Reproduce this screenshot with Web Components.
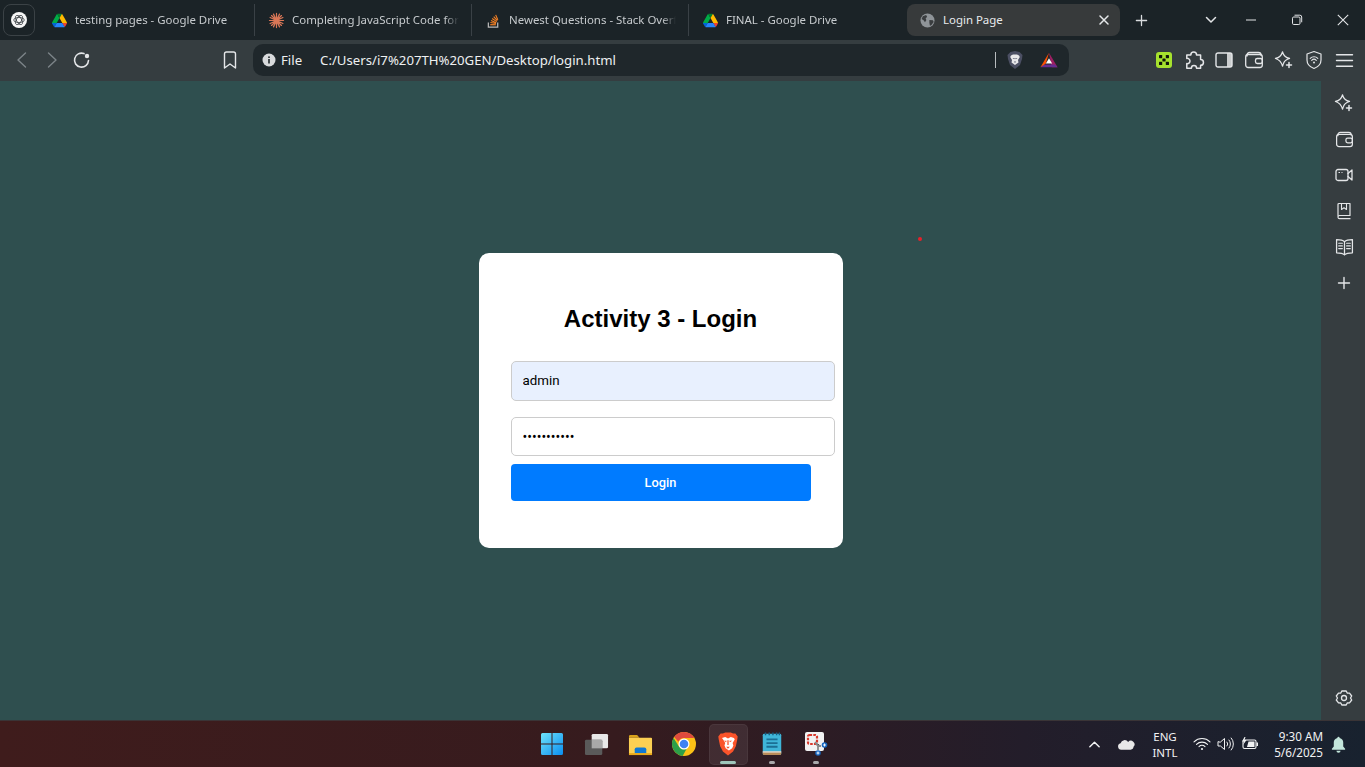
<!DOCTYPE html>
<html lang="en">
<head>
<meta charset="utf-8">
<title>Login Page</title>
<style>
  html, body { margin: 0; height: 100%; overflow: hidden; background: #2f4f4f; }
  body { font-family: "Noto Sans", "Liberation Sans", sans-serif; }
</style>
</head>
<body>
<browser-window>
  <tab-strip></tab-strip>
  <nav-toolbar></nav-toolbar>
  <page-view><login-card></login-card></page-view>
  <task-bar></task-bar>
</browser-window>

<script>
const LINE = 'fill="none" stroke="currentColor" stroke-linecap="round" stroke-linejoin="round"';
const DRIVE = `<svg viewBox="0 0 87.3 78"><path fill="#0066da" d="m6.6 66.85 3.85 6.65c.8 1.4 1.95 2.5 3.3 3.3l13.75-23.8h-27.5c0 1.55.4 3.1 1.2 4.5z"/><path fill="#00ac47" d="m43.65 25-13.75-23.8c-1.35.8-2.5 1.9-3.3 3.3l-25.4 44a9.06 9.06 0 0 0 -1.2 4.5h27.5z"/><path fill="#ea4335" d="m73.55 76.8c1.35-.8 2.5-1.9 3.3-3.3l1.6-2.75 7.65-13.25c.8-1.4 1.2-2.95 1.2-4.5h-27.502l5.852 11.5z"/><path fill="#00832d" d="m43.65 25 13.75-23.8c-1.35-.8-2.9-1.2-4.5-1.2h-18.5c-1.6 0-3.15.45-4.5 1.2z"/><path fill="#2684fc" d="m59.8 53h-32.3l-13.75 23.8c1.35.8 2.9 1.2 4.5 1.2h50.8c1.6 0 3.15-.45 4.5-1.2z"/><path fill="#ffba00" d="m73.4 26.5-12.7-22c-.8-1.4-1.95-2.5-3.3-3.3l-13.75 23.8 16.15 28h27.45c0-1.55-.4-3.1-1.2-4.5z"/></svg>`;

const ICONS = {
  drive: DRIVE,
  openai: `<svg viewBox="0 0 16 16"><circle cx="8" cy="8" r="8" fill="#f6f6f6"/><g fill="none" stroke="#3a4044" stroke-width=".8"><ellipse cx="8" cy="8" rx="5.200" ry="2.500"/><ellipse cx="8" cy="8" rx="5.200" ry="2.500" transform="rotate(60 8 8)"/><ellipse cx="8" cy="8" rx="5.200" ry="2.500" transform="rotate(120 8 8)"/></g></svg>`,
  claude: `<svg viewBox="0 0 16 16"><g stroke="#d97757" stroke-width="1.300" stroke-linecap="round"><path d="M8 .5v15M.5 8h15M2.700 2.700l10.600 10.600M13.300 2.700 2.700 13.300M4.800 1.200l6.400 13.600M11.200 1.200l-6.400 13.600M1.200 4.800l13.600 6.400M14.800 4.800l-13.600 6.400"/></g><circle cx="8" cy="8" r="2.500" fill="#d97757"/></svg>`,
  stack: `<svg viewBox="0 0 16 16"><path d="M2.500 10v5h10v-5" fill="none" stroke="#bcbbbb" stroke-width="1.300"/><path d="M4.500 12.500h6" stroke="#f48024" stroke-width="1.300"/><path d="M4.700 10.200l6 1M5.300 8l5.600 2.400M6.500 5.800l5 3.400M8.200 3.800l3.900 4.400M10.300 2l2.300 5.300" fill="none" stroke="#f48024" stroke-width="1.200"/></svg>`,
  globe: `<svg viewBox="0 0 16 16"><circle cx="8" cy="8" r="7.500" fill="#8f9498"/><path fill="#3a3d3f" d="M3 3.500 6.500 2.200 7.600 4 6 5.800 6.800 7.500 5.300 9.800 3.800 7.600 1.700 6.500zM10 7.500l3.800.3.800 1.700-2.600 3.500-1.400.6-.6-3.200z"/></svg>`,
  close: `<svg viewBox="0 0 12 12"><path ${LINE} stroke-width="1.500" d="M2 2l8 8M10 2l-8 8"/></svg>`,
  plus: `<svg viewBox="0 0 14 14"><path ${LINE} stroke-width="1.400" d="M7 1.500v11M1.500 7h11"/></svg>`,
  chevdown: `<svg viewBox="0 0 14 14"><path ${LINE} stroke-width="1.500" d="M2.500 4.500 7 9l4.500-4.500"/></svg>`,
  min: `<svg viewBox="0 0 12 12"><path stroke="currentColor" d="M1 6h10"/></svg>`,
  restore: `<svg viewBox="0 0 12 12"><rect x="1.500" y="3" width="7.500" height="7.500" rx="1.200" fill="none" stroke="currentColor"/><path d="M3.500 1.200h5.300A1.800 1.800 0 0 1 10.700 3v5.300" fill="none" stroke="currentColor"/></svg>`,
  winclose: `<svg viewBox="0 0 12 12"><path stroke="currentColor" stroke-width="1.100" d="M.8.8l10.400 10.400M11.200.8.8 11.200"/></svg>`,
  back: `<svg viewBox="0 0 20 20"><path ${LINE} stroke-width="1.400" d="M13.500 3 6 10l7.500 7"/></svg>`,
  forward: `<svg viewBox="0 0 20 20"><path ${LINE} stroke-width="1.400" d="M6.500 3 14 10l-7.500 7"/></svg>`,
  reload: `<svg viewBox="0 0 20 20"><path ${LINE} stroke-width="1.600" d="M16.500 10.500A7 7 0 1 1 12 3.600"/><circle cx="15" cy="6" r="2.200" fill="currentColor"/></svg>`,
  bookmark: `<svg viewBox="0 0 20 20"><path ${LINE} stroke-width="1.400" d="M4.500 4A2 2 0 0 1 6.500 2h7a2 2 0 0 1 2 2v14L10 14l-5.500 4z"/></svg>`,
  info: `<svg viewBox="0 0 14 14"><circle cx="7" cy="7" r="6.500" fill="#d8dadc"/><rect x="6.200" y="6" width="1.600" height="4.500" fill="#1f272b"/><rect x="6.200" y="3.400" width="1.600" height="1.600" fill="#1f272b"/></svg>`,
  shieldlion: `<svg viewBox="0 0 16 18"><path fill="#4b4f63" d="M3.500 1 8 0l4.500 1L15.500 4 15 8l-2 6-5 4-5-4-2-6L.5 4z"/><path fill="#e8e8ea" d="M4 4.500 6 3.500h4L12 4.500 12.800 6 11 9l.5 2.500L8 14 4.500 11.500 5 9 3.200 6z"/><path fill="#4b4f63" d="M5.500 7h2v1.200zM10.500 7h-2v1.200zM7 10.500h2L8 12z"/></svg>`,
  bat: `<svg viewBox="0 0 20 18"><path fill="#9e1f63" d="M10 1 19.500 17H13z"/><path fill="#662d91" d="M.5 17h19l-3-3H3.500z"/><path fill="#ff5000" d="M10 1 .5 17l6-4z"/><path fill="#fff" d="M10 7l3.500 6h-7z"/></svg>`,
  dice: `<svg viewBox="0 0 16 16"><rect width="16" height="16" rx="3" fill="#a6e22e"/><g fill="#10160a"><rect x="3" y="3" width="3.200" height="3.200" rx=".6"/><rect x="9.800" y="3" width="3.200" height="3.200" rx=".6"/><rect x="6.400" y="6.400" width="3.200" height="3.200" rx=".6"/><rect x="3" y="9.800" width="3.200" height="3.200" rx=".6"/><rect x="9.800" y="9.800" width="3.200" height="3.200" rx=".6"/></g></svg>`,
  puzzle: `<svg viewBox="0 0 20 20"><path ${LINE} stroke-width="1.300" d="M3.500 6H7a2.500 2.500 0 1 1 5 0h3.500v4a2.500 2.500 0 1 1 0 5v2.500H12a2.200 2.200 0 1 0-4.500 0H3.500V13.500a2.300 2.300 0 1 0 0-4.500z" transform="translate(-.2 -.8)"/></svg>`,
  panel: `<svg viewBox="0 0 18 16"><rect x="1" y="1" width="16" height="14" rx="2" fill="none" stroke="currentColor" stroke-width="1.400"/><path d="M12 1h3a2 2 0 0 1 2 2v10a2 2 0 0 1-2 2h-3z" fill="currentColor" opacity=".85"/></svg>`,
  wallet: `<svg viewBox="0 0 20 18"><path ${LINE} stroke-width="1.300" d="M3 5V4a2.500 2.500 0 0 1 2.500-2.500h9A2.500 2.500 0 0 1 17 4"/><rect x="1.700" y="3.500" width="16.600" height="13" rx="2.500" fill="none" stroke="currentColor" stroke-width="1.300"/><rect x="11.500" y="7.500" width="6.800" height="5" rx="1.800" fill="none" stroke="currentColor" stroke-width="1.300"/></svg>`,
  leo: `<svg viewBox="0 0 20 20"><path ${LINE} stroke-width="1.300" d="M8.500 1.800c1 3.800 2.800 5.600 7 6.700-3.300 1-5 2.300-5.800 4.500M8.500 1.800c-1 3.800-2.800 5.600-7 6.700 3.800 1.100 5.800 3.200 7 7.700.3-1 .6-1.900 1-2.700"/><path ${LINE} stroke-width="1.500" d="M15 12.500v5M12.500 15h5"/></svg>`,
  vpn: `<svg viewBox="0 0 18 20"><path ${LINE} stroke-width="1.200" d="M9 1.500 16 4v6c0 4-3 7-7 8.500C5 17 2 14 2 10V4z"/><path ${LINE} stroke-width="1.100" d="M5.200 8.300a5.500 5.500 0 0 1 7.600 0M6.700 10.300a3.300 3.300 0 0 1 4.600 0"/><circle cx="9" cy="12.500" r="1" fill="currentColor"/></svg>`,
  menu: `<svg viewBox="0 0 18 14"><path stroke="currentColor" stroke-width="1.500" stroke-linecap="round" d="M1.500 1.500h15M1.500 7h15M1.500 12.500h15"/></svg>`,
  camera: `<svg viewBox="0 0 18 14"><rect x="1" y="1.500" width="12" height="11" rx="2" fill="none" stroke="currentColor" stroke-width="1.300"/><path ${LINE} stroke-width="1.300" d="M13 5.500 17 2v10l-4-3.500"/><path stroke="currentColor" stroke-width="1.200" d="M3.500 4.500h1.500M6.500 4.500h1"/></svg>`,
  book: `<svg viewBox="0 0 16 18"><path ${LINE} stroke-width="1.200" d="M2 14.500V2.500a1 1 0 0 1 1-1h11v12H3.500A1.700 1.700 0 0 0 2 15.200a1.700 1.700 0 0 0 1.500 1.500H14"/><path ${LINE} stroke-width="1.100" d="M5.500 1.500v6L8 5.800l2.500 1.700v-6"/></svg>`,
  reader: `<svg viewBox="0 0 18 18"><path ${LINE} stroke-width="1.200" d="M9 3.500C7.500 2 5 1.500 1.500 1.500v12.500c3.500 0 6 .5 7.500 2 1.500-1.500 4-2 7.500-2V1.500C13 1.500 10.500 2 9 3.500zM9 3.500V16"/><path ${LINE} stroke-width="1.100" d="M3.500 5h3.500M3.500 7.500h3.500M3.500 10h3.500M11 5h3.500M11 7.500h3.500M11 10h3.500"/></svg>`,
  cog: `<svg viewBox="0 0 18 18"><path ${LINE} stroke-width="1.300" d="M6.800 2h4.400l1 2 2.300.2L16.700 7l-1.200 2 1.200 2-2.200 2.800-2.300.2-1 2H6.800l-1-2-2.300-.2L1.300 11l1.200-2-1.200-2 2.200-2.800L5.800 4z"/><circle cx="9" cy="9" r="2.500" fill="none" stroke="currentColor" stroke-width="1.300"/></svg>`,
  windows: `<svg viewBox="0 0 24 24"><defs><linearGradient id="w" x1="0" y1="0" x2="1" y2="1"><stop offset="0" stop-color="#6fe3fb"/><stop offset="1" stop-color="#0a8ef0"/></linearGradient></defs><path fill="url(#w)" d="M1 2.500A1.500 1.500 0 0 1 2.500 1h9v10.500H1zM12.500 1h9A1.500 1.500 0 0 1 23 2.500v9H12.500zM1 12.500h10.500V23h-9A1.500 1.500 0 0 1 1 21.500zM12.500 12.500H23v9a1.500 1.500 0 0 1-1.500 1.500h-9z"/></svg>`,
  taskview: `<svg viewBox="0 0 26 24"><rect x="8" y="1" width="17" height="15" rx="1.500" fill="#e8e8e8"/><rect x="1" y="7" width="18" height="16" rx="1.500" fill="#5a5a5a"/><rect x="8" y="7" width="11" height="9" fill="#a8a8a8"/></svg>`,
  folder: `<svg viewBox="0 0 26 24"><path fill="#d9a21b" d="M1 3.500A1.500 1.500 0 0 1 2.500 2h7l2.500 3h-11z"/><path fill="#fcd053" d="M1 5h23a1 1 0 0 1 1 1v15.500a1.500 1.500 0 0 1-1.500 1.500h-21A1.500 1.500 0 0 1 1 21.500z"/><path fill="#0f78d4" d="M7 21v-4a2 2 0 0 1 2-2h8a2 2 0 0 1 2 2v4z"/><rect x="1" y="21" width="24" height="2" fill="#e9a91a"/></svg>`,
  chrome: `<svg viewBox="0 0 24 24"><circle cx="12" cy="12" r="12" fill="#fbc116"/><path fill="#dd4b3e" d="M12 0a12 12 0 0 1 10.400 6H12a6 6 0 0 0-5.600 3.800L2.200 5A12 12 0 0 1 12 0z"/><path fill="#2c9f49" d="M1.600 5.900A12 12 0 0 0 10.600 23.900l4.200-7.300a6 6 0 0 1-7.900-2z"/><circle cx="12" cy="12" r="5.500" fill="#fff"/><circle cx="12" cy="12" r="4.300" fill="#3e82f1"/></svg>`,
  brave: `<svg viewBox="0 0 22 26"><path fill="#fb542b" d="M5.500 1.500 8 .5h6l2.500 1 2.500.2L21.500 5 21 8.500l-1.500 7-3 5.500L11 25.500 5.500 21l-3-5.500L1 8.500.5 5 3 1.700z"/><path fill="#fff" d="M4.500 6.500 8 5.500 11 7l3-1.500 3.500 1 .8 1.500-2.300 4 .8 2.500-1.300 3-3.500 2.500-3.500-2.500-1.300-3 .8-2.500-2.300-4z"/><path fill="#fb542b" d="M6.500 9.500h3l-.5 1.700zM15.500 9.500h-3l.5 1.700zM9 16h4l-2 2.200zM10.300 9h1.400v5h-1.400z"/></svg>`,
  notepad: `<svg viewBox="0 0 22 26"><rect x="1" y="2" width="20" height="23" rx="1.500" fill="#3fb5d8"/><path fill="#b98c5a" d="M1 21h20v2.500a1.500 1.500 0 0 1-1.500 1.500h-17A1.500 1.500 0 0 1 1 23.500z"/><rect x="1" y="21" width="20" height="1.200" fill="#eee"/><path stroke="#1b6f94" stroke-width="2" d="M5 8h12M5 12h12M5 16h12"/><path stroke="#145d80" stroke-width="1.500" d="M4 .5v3M8 .5v3M12 .5v3M16 .5v3M19 .5v3"/></svg>`,
  snip: `<svg viewBox="0 0 24 26"><rect x="1" y="1" width="19" height="19" rx="2" fill="#f2f2f2"/><rect x="4" y="4" width="9" height="9" rx="1.500" fill="none" stroke="#d8382c" stroke-width="2.200" stroke-dasharray="2.600 1.200"/><path stroke="#8a8a8a" stroke-width="1.800" d="M11 11 14 15l3 0M14 15v4"/><circle cx="20.500" cy="14" r="2.800" fill="#1566c0"/><circle cx="14" cy="22" r="2.800" fill="#1566c0"/><path stroke="#fff" stroke-width=".9" d="M19 14h3M20.500 12.500v3M12.500 22h3M14 20.500v3"/></svg>`,
  chevup: `<svg viewBox="0 0 14 14"><path ${LINE} stroke-width="1.600" d="M2 9.500 7 4.500l5 5"/></svg>`,
  cloud: `<svg viewBox="0 0 18 12"><path fill="#e8e8e8" d="M4.500 11.500A3.500 3.500 0 0 1 3.800 4.600 4.500 4.500 0 0 1 11.800 3.300 3.800 3.800 0 0 1 17.500 8.500c0 1.700-1.200 3-3 3z"/></svg>`,
  wifi: `<svg viewBox="0 0 18 14"><path ${LINE} stroke-width="1.100" d="M1 4.800a11.500 11.500 0 0 1 16 0M3.500 7.300a8 8 0 0 1 11 0M6 9.600a4.300 4.300 0 0 1 6 0"/><circle cx="9" cy="12" r="1.100" fill="currentColor"/></svg>`,
  volume: `<svg viewBox="0 0 18 14"><path ${LINE} stroke-width="1" d="M1 5v4h2.500L7.500 12.500v-11L3.500 5zM10 5a3 3 0 0 1 0 4M12 3a6 6 0 0 1 0 8M14.200 1a9 9 0 0 1 0 12"/></svg>`,
  battery: `<svg viewBox="0 0 18 14"><rect x="2" y="3" width="13" height="8.500" rx="1.500" fill="none" stroke="currentColor" stroke-width="1.100"/><rect x="15.500" y="5.500" width="1.500" height="3.500" fill="currentColor"/><path fill="currentColor" d="M7.500 4.500h6v5.500H6zM3.500 0 1 4.500h2L2 8l3.500-5h-2l1-3z"/></svg>`,
  bell: `<svg viewBox="0 0 16 18"><path fill="#c3e6db" d="M8 .8a1.200 1.200 0 0 1 1.200 1.200A5 5 0 0 1 13 7v4l2 2.500v1H1v-1L3 11V7a5 5 0 0 1 3.800-5A1.200 1.200 0 0 1 8 .8zM5.800 15.500h4.400a2.200 2.200 0 0 1-4.400 0z"/></svg>`
};

// one inline icon; "name" picks the drawing, "size" its box in px
class UiIcon extends HTMLElement {
  connectedCallback() {
    const size = this.getAttribute("size") || 16;
    const root = this.shadowRoot || this.attachShadow({ mode: "open" });
    root.innerHTML = `
      <style>
        :host { display: inline-flex; align-items: center; justify-content: center; flex: none; width: ${size}px; height: ${size}px; }
        svg { display: block; width: 100%; height: 100%; overflow: visible; }
      </style>
      ${ICONS[this.getAttribute("name")] || ""}
    `;
  }
}
customElements.define("ui-icon", UiIcon);

class BrowserWindow extends HTMLElement {
  constructor() {
    super();
    this.attachShadow({ mode: "open" }).innerHTML = `
      <style>
        :host { display: flex; flex-direction: column; height: 100vh; }
      </style>
      <slot></slot>
    `;
  }
}
customElements.define("browser-window", BrowserWindow);

class BrowserTab extends HTMLElement {
  constructor() {
    super();
    this.attachShadow({ mode: "open" });
  }
  connectedCallback() {
    const active = this.hasAttribute("active");
    this.shadowRoot.innerHTML = `
      <style>
        :host { display: flex; align-items: center; flex: none; box-sizing: border-box; width: 217px; height: 32px; padding-left: 14px; gap: 8px; color: #c6cacd; font-size: 11.45px; border-right: 1px solid #3a4146; }
        :host([active]) { width: 213px; margin-left: 1px; padding: 0 10px 0 13px; border: 0; border-radius: 8px; background: #373a3b; color: #e8eaed; }
        :host([last]) { border-right: 0; }
        .title { flex: 1; min-width: 0; white-space: nowrap; overflow: hidden; margin: -2px 12px 0 0;
          -webkit-mask-image: linear-gradient(to left, transparent 0, #000 14px); }
        :host([active]) .title { -webkit-mask-image: none; margin-right: 0; }
        .x { color: #e6e8ea; }
      </style>
      <ui-icon name="${this.getAttribute("icon")}" size="15"></ui-icon>
      <span class="title"><slot></slot></span>
      ${active ? '<ui-icon class="x" name="close" size="12"></ui-icon>' : ""}
    `;
  }
}
customElements.define("browser-tab", BrowserTab);

class TabStrip extends HTMLElement {
  constructor() {
    super();
    this.attachShadow({ mode: "open" }).innerHTML = `
      <style>
        :host { display: flex; align-items: center; flex: none; height: 40px; background: #1b2327; box-sizing: border-box; padding-left: 3px; }
        .app { display: flex; align-items: center; justify-content: center; box-sizing: border-box; width: 32px; height: 32px; border: 1px solid #3b4246; border-radius: 8px; margin-right: 3px; flex: none; }
        .new { margin-left: 15px; color: #d9dcde; }
        .win { display: flex; align-items: center; margin-left: auto; margin-right: -1px; color: #e3e5e7; }
        .win span { display: flex; align-items: center; justify-content: center; width: 46px; }
        .win span:first-child { margin-right: -6px; }
      </style>
      <div class="app"><ui-icon name="openai" size="16"></ui-icon></div>
      <browser-tab icon="drive">testing pages - Google Drive</browser-tab>
      <browser-tab icon="claude">Completing JavaScript Code for Login</browser-tab>
      <browser-tab icon="stack">Newest Questions - Stack Overflow</browser-tab>
      <browser-tab icon="drive" last>FINAL - Google Drive</browser-tab>
      <browser-tab icon="globe" active>Login Page</browser-tab>
      <ui-icon class="new" name="plus" size="13"></ui-icon>
      <div class="win">
        <span><ui-icon name="chevdown" size="14"></ui-icon></span>
        <span><ui-icon name="min" size="12"></ui-icon></span>
        <span><ui-icon name="restore" size="12"></ui-icon></span>
        <span><ui-icon name="winclose" size="12"></ui-icon></span>
      </div>
    `;
  }
}
customElements.define("tab-strip", TabStrip);

class NavToolbar extends HTMLElement {
  constructor() {
    super();
    this.attachShadow({ mode: "open" }).innerHTML = `
      <style>
        :host { display: flex; align-items: center; flex: none; height: 41px; box-sizing: border-box; padding: 0 6px 1px 7px; background: #353d40; color: #e4e6e8; }
        .btn { display: flex; align-items: center; justify-content: center; width: 30px; height: 30px; flex: none; }
        .off { color: #7c8488; }
        .mark { margin-left: 118px; }
        .url { display: flex; align-items: center; flex: 1; height: 32px; margin: 0 80px 0 8px; padding: 0 11px 0 9px; border-radius: 10px; background: #1f272b; color: #eef0f1; font-size: 13.2px; }
        .file { margin-left: 5px; }
        .path { margin-left: 18px; flex: 1; }
        .sep { width: 1px; height: 16px; background: #b8bcbf; margin-right: 10px; }
        .bat { margin-left: 16px; }
      </style>
      <span class="btn off"><ui-icon name="back" size="20"></ui-icon></span>
      <span class="btn off"><ui-icon name="forward" size="20"></ui-icon></span>
      <span class="btn"><ui-icon name="reload" size="20"></ui-icon></span>
      <span class="btn mark"><ui-icon name="bookmark" size="20"></ui-icon></span>
      <div class="url">
        <ui-icon name="info" size="14"></ui-icon>
        <span class="file">File</span>
        <span class="path">C:/Users/i7%207TH%20GEN/Desktop/login.html</span>
        <span class="sep"></span>
        <ui-icon name="shieldlion" size="18"></ui-icon>
        <ui-icon class="bat" name="bat" size="18"></ui-icon>
      </div>
      <span class="btn"><ui-icon name="dice" size="16"></ui-icon></span>
      <span class="btn"><ui-icon name="puzzle" size="23"></ui-icon></span>
      <span class="btn"><ui-icon name="panel" size="18"></ui-icon></span>
      <span class="btn"><ui-icon name="wallet" size="20"></ui-icon></span>
      <span class="btn"><ui-icon name="leo" size="20"></ui-icon></span>
      <span class="btn"><ui-icon name="vpn" size="20"></ui-icon></span>
      <span class="btn"><ui-icon name="menu" size="19"></ui-icon></span>
    `;
  }
}
customElements.define("nav-toolbar", NavToolbar);

class PageView extends HTMLElement {
  constructor() {
    super();
    this.attachShadow({ mode: "open" }).innerHTML = `
      <style>
        :host { display: flex; flex: 1; min-height: 0; }
        main { position: relative; flex: 1; display: flex; align-items: center; justify-content: center; background: #2f4f4f; }
        .dot { position: absolute; left: 918px; top: 156px; width: 4px; height: 4px; border-radius: 50%; background: #e8202a; }
      </style>
      <main><slot></slot><span class="dot"></span></main>
      <side-panel></side-panel>
    `;
  }
}
customElements.define("page-view", PageView);

class SidePanel extends HTMLElement {
  constructor() {
    super();
    this.attachShadow({ mode: "open" }).innerHTML = `
      <style>
        :host { display: flex; flex-direction: column; align-items: center; flex: none; width: 44px; box-sizing: border-box; padding: 4px 0 0 2px; background: #363d40; color: #e4e6e8; }
        span { display: flex; align-items: center; justify-content: center; width: 36px; height: 36px; flex: none; }
        .cog { margin-top: auto; margin-bottom: 4px; }
      </style>
      <span><ui-icon name="leo" size="20"></ui-icon></span>
      <span><ui-icon name="wallet" size="19"></ui-icon></span>
      <span><ui-icon name="camera" size="18"></ui-icon></span>
      <span><ui-icon name="book" size="18"></ui-icon></span>
      <span><ui-icon name="reader" size="19"></ui-icon></span>
      <span><ui-icon name="plus" size="14"></ui-icon></span>
      <span class="cog"><ui-icon name="cog" size="18"></ui-icon></span>
    `;
  }
}
customElements.define("side-panel", SidePanel);

class LoginCard extends HTMLElement {
  constructor() {
    super();
    this.attachShadow({ mode: "open" }).innerHTML = `
      <style>
        :host { display: block; flex: none; width: 300px; padding: 32px; border-radius: 10px; background: #fff; color: #000; font-family: Roboto, "Liberation Sans", sans-serif; }
        h2 { margin: 20px 0 28px; font: bold 24px/28px "Liberation Sans", Arial, sans-serif; text-align: center; }
        form { display: block; margin: 0 0 15px; }
        input { display: block; box-sizing: border-box; width: 324px; padding: 0 11px; border: 1px solid #ccc; border-radius: 5px; outline: 0; font: 14px Roboto, "Liberation Sans", sans-serif; color: #000; background: #fff; }
        .user { height: 40px; padding-bottom: 1px; background: #e8f0fe; margin-bottom: 16px; font-size: 13.33px; }
        .pass { height: 39px; margin-bottom: 8px; }
        button { display: block; width: 300px; height: 37px; padding: 0 0 1px; border: 0; border-radius: 4px; background: #007bff; color: #fff; font: 500 12.8px Roboto, "Liberation Sans", sans-serif; }
      </style>
      <h2>Activity 3 - Login</h2>
      <form>
        <input class="user" type="text" value="admin" aria-label="Username">
        <input class="pass" type="password" value="admin123456" aria-label="Password">
        <button type="button">Login</button>
      </form>
    `;
  }
}
customElements.define("login-card", LoginCard);

class TaskBar extends HTMLElement {
  constructor() {
    super();
    this.attachShadow({ mode: "open" }).innerHTML = `
      <style>
        :host { display: flex; align-items: center; flex: none; height: 47px; box-sizing: border-box; border-top: 1px solid #3a3436; background: linear-gradient(90deg, #3f1c1c 0, #361b1e 45%, #231d2a 75%, #18222f 100%); color: #f1f2f3; font-size: 11.7px; }
        .apps { display: flex; margin-left: 530px; height: 46px; }
        .app { position: relative; display: flex; align-items: center; justify-content: center; width: 44px; height: 46px; }
        .app.on::before { content: ""; position: absolute; left: 3px; right: 2px; top: 3px; bottom: 2px; border-radius: 5px; background: #ffffff14; border: 1px solid #ffffff0d; }
        .app ui-icon { position: relative; }
        .app i { position: absolute; left: 50%; bottom: 3px; width: 6px; height: 3px; margin-left: -3px; border-radius: 2px; background: #a9a9ab; }
        .app.on i { width: 16px; margin-left: -8px; background: #9fc6bb; }
        .tray { display: flex; align-items: center; margin-left: auto; padding-right: 15px; }
        .cell { display: flex; align-items: center; justify-content: center; }
        .lang { width: 38px; margin: 0 6px 0 2px; padding-top: 2px; text-align: center; line-height: 16px; font-size: 11.5px; }
        .time { width: 61px; margin-right: 3px; text-align: right; line-height: 16px; }
      </style>
      <div class="apps">
        <span class="app"><ui-icon name="windows" size="24"></ui-icon></span>
        <span class="app"><ui-icon name="taskview" size="25"></ui-icon></span>
        <span class="app"><ui-icon name="folder" size="25"></ui-icon></span>
        <span class="app"><ui-icon name="chrome" size="24"></ui-icon></span>
        <span class="app on"><ui-icon name="brave" size="24"></ui-icon><i></i></span>
        <span class="app"><ui-icon name="notepad" size="24"></ui-icon><i></i></span>
        <span class="app"><ui-icon name="snip" size="26"></ui-icon><i></i></span>
      </div>
      <div class="tray">
        <span class="cell" style="width:24px"><ui-icon name="chevup" size="13"></ui-icon></span>
        <span class="cell" style="width:38px"><ui-icon name="cloud" size="17"></ui-icon></span>
        <div class="lang">ENG<br>INTL</div>
        <span class="cell" style="width:24px"><ui-icon name="wifi" size="18"></ui-icon></span>
        <span class="cell" style="width:24px"><ui-icon name="volume" size="18"></ui-icon></span>
        <span class="cell" style="width:24px"><ui-icon name="battery" size="18"></ui-icon></span>
        <div class="time">9:30 AM<br>5/6/2025</div>
        <span class="cell" style="width:24px"><ui-icon name="bell" size="17"></ui-icon></span>
      </div>
    `;
  }
}
customElements.define("task-bar", TaskBar);
</script>
</body>
</html>
